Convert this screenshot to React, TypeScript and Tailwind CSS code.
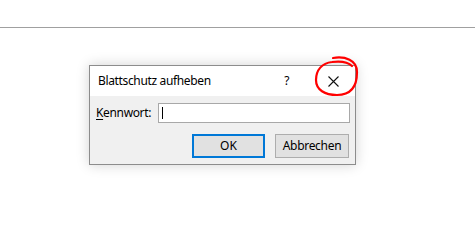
import React from "react";

export default function App() {
  return (
    <div
      className="relative w-[475px] h-[244px] bg-white overflow-hidden"
      style={{ fontFamily: '"Noto Sans", "Open Sans", sans-serif' }}
    >
      <div className="pt-[27px]">
        <div className="h-px bg-[#a0a0a0]" />
      </div>
      <div className="ml-[89px] mt-[37px] w-[267px] h-[100px] border border-[#8c8c8c] bg-[#f0f0f0] shadow-[0_0_12px_rgba(0,0,0,0.18)] flex flex-col">
        <div className="h-[30px] bg-white flex items-center text-[12px] tracking-[-0.35px] text-black">
          <span className="ml-[8px] leading-none">Blattschutz aufheben</span>
          <span className="ml-auto mr-[39px] leading-none">?</span>
          <svg width="11" height="11" viewBox="0 0 11 11" className="mr-[16px]">
            <path d="M0.5 0.5 L10.5 10.5 M10.5 0.5 L0.5 10.5" stroke="#111" strokeWidth="1.1" />
          </svg>
        </div>
        <div className="flex-1 flex flex-col">
          <div className="flex items-center mt-[7px] ml-[6px]">
            <span className="text-[12px] tracking-[-0.35px] w-[62px] leading-none text-black">
              <span className="underline underline-offset-2">K</span>ennwort:
            </span>
            <div className="w-[192px] h-[20px] bg-white border border-[#a8a8a8] flex items-center pl-[3px]">
              <div className="w-px h-[12px] bg-black" />
            </div>
          </div>
          <div className="flex mt-[11px] ml-[102px] gap-[10px]">
            <button className="w-[73px] h-[24px] bg-[#e1e1e1] border-2 border-[#0078d7] text-[12px] text-black leading-none">
              OK
            </button>
            <button className="w-[74px] h-[24px] bg-[#e1e1e1] border border-[#adadad] text-[12px] tracking-[-0.3px] text-black leading-none">
              Abbrechen
            </button>
          </div>
        </div>
      </div>
      <svg className="absolute left-0 top-0" width="475" height="244" viewBox="0 0 475 244">
        <path
          d="M333 58 C345 56, 357 60, 357 72 C357 85, 352 95, 337 95 C325 95, 316 90, 316 80 C316 70, 322 63, 332 62 C340 61, 348 62, 352 66"
          fill="none"
          stroke="#ff0000"
          strokeWidth="2.2"
          strokeLinecap="round"
        />
      </svg>
    </div>
  );
}
